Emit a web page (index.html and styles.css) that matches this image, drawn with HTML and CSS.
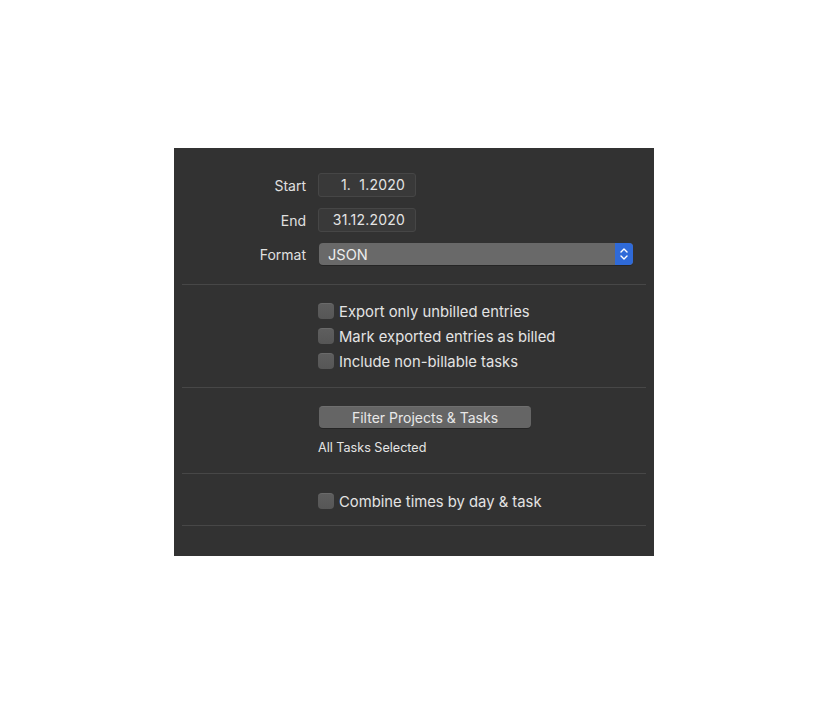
FILE: index.html
```html
<!DOCTYPE html>
<html>
<head>
<meta charset="utf-8">
<link rel="stylesheet" href="styles.css">
</head>
<body>
<div class="panel">
  <div class="form">
    <div class="label">Start</div>
    <div class="datefield"><span class="pre">1.  1.2020</span></div>
    <div class="label">End</div>
    <div class="datefield">31.12.2020</div>
    <div class="label">Format</div>
    <div class="popup">
      <span class="popup-text">JSON</span>
      <span class="stepper">
        <svg width="10" height="16" viewBox="0 0 10 16"><path d="M2 6 L5 3 L8 6 M2 10 L5 13 L8 10" fill="none" stroke="#fff" stroke-width="1.4" stroke-linecap="round" stroke-linejoin="round"/></svg>
      </span>
    </div>
  </div>
  <div class="sep"></div>
  <div class="checks">
    <label class="check"><span class="box"></span><span class="txt">Export only unbilled entries</span></label>
    <label class="check"><span class="box"></span><span class="txt">Mark exported entries as billed</span></label>
    <label class="check"><span class="box"></span><span class="txt">Include non-billable tasks</span></label>
  </div>
  <div class="sep"></div>
  <div class="filter">
    <div class="button">Filter Projects &amp; Tasks</div>
    <div class="note">All Tasks Selected</div>
  </div>
  <div class="sep"></div>
  <div class="checks single">
    <label class="check"><span class="box"></span><span class="txt">Combine times by day &amp; task</span></label>
  </div>
  <div class="sep"></div>
</div>
</body>
</html>
```

FILE: styles.css
```css
html, body {
  margin: 0;
  padding: 0;
  background: #ffffff;
}
body {
  font-family: Inter, "Noto Sans", "Liberation Sans", sans-serif;
  padding-top: 148px;
  padding-left: 174px;
}
.panel {
  width: 480px;
  height: 408px;
  background: #323232;
  color: #dedede;
  font-size: 14px;
  box-sizing: border-box;
  padding-top: 25px;
}
.form {
  display: grid;
  grid-template-columns: 132px 315px;
  grid-template-rows: 24px 24px 22px;
  column-gap: 12px;
  row-gap: 11px;
  align-items: center;
  margin-bottom: 19px;
}
.label {
  text-align: right;
  color: #e0e0e0;
  line-height: 1;
  padding-top: 2px;
}
.datefield {
  width: 98px;
  height: 24px;
  box-sizing: border-box;
  background: #393939;
  border: 1px solid #464646;
  border-radius: 3px;
  text-align: right;
  padding-right: 10px;
  line-height: 22px;
  color: #e4e4e4;
  letter-spacing: 0.2px;
}
.pre { white-space: pre; }
.popup {
  margin-left: 1px;
  width: 314px;
  height: 22px;
  background: #696969;
  border-radius: 4px;
  display: flex;
  align-items: center;
  justify-content: space-between;
  box-shadow: 0 1px 0 rgba(0,0,0,0.25);
}
.popup-text {
  padding-left: 9px;
  padding-top: 2px;
  color: #ededed;
  font-size: 14.6px;
}
.stepper {
  width: 18px;
  height: 22px;
  background: #2f6ad8;
  border-radius: 0 4px 4px 0;
  display: flex;
  align-items: center;
  justify-content: center;
}
.sep {
  height: 1px;
  background: #474747;
  margin: 0 8px;
}
.checks {
  padding: 13px 0 14px 144px;
}
.checks.single {
  padding: 14px 0 12px 144px;
}
.check {
  display: flex;
  align-items: center;
  height: 25px;
  color: #e4e4e4;
  font-size: 14.8px;
}
.txt {
  padding-top: 2px;
}
.box {
  width: 16px;
  height: 16px;
  box-sizing: border-box;
  border-radius: 4px;
  background: linear-gradient(#5e5e5e, #565656);
  border-top: 1px solid #6a6a6a;
  margin-right: 5px;
  flex: none;
}
.filter {
  padding: 18px 0 0 144px;
  height: 85px;
  box-sizing: border-box;
}
.button {
  margin-left: 1px;
  width: 212px;
  height: 22px;
  background: #656565;
  border-radius: 4px;
  border-top: 1px solid #6f6f6f;
  box-sizing: border-box;
  text-align: center;
  line-height: 22px;
  color: #e8e8e8;
  font-size: 14px;
  box-shadow: 0 1px 0 rgba(0,0,0,0.25);
}
.note {
  margin-top: 12px;
  font-size: 12.6px;
  color: #e4e4e4;
}
```
